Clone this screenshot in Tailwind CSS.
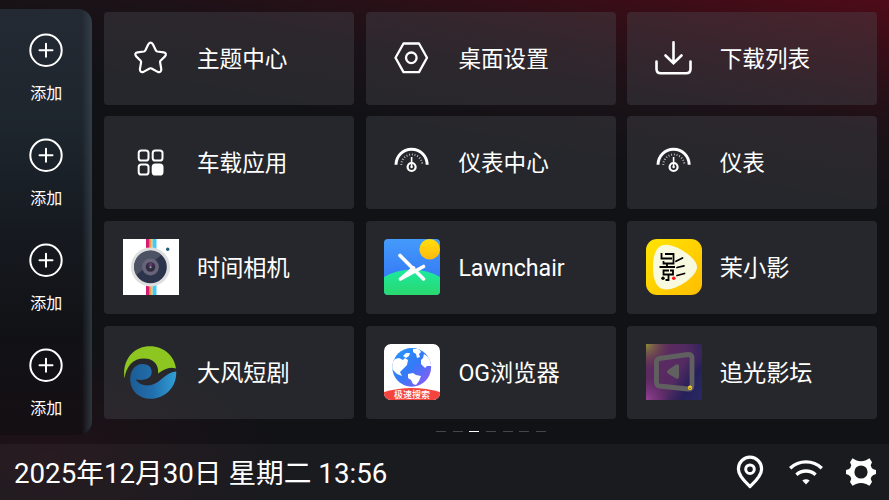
<!DOCTYPE html>
<html lang="zh-CN">
<head>
  <meta charset="UTF-8" />
  <meta name="viewport" content="width=device-width, initial-scale=1.0" />
  <title>车载桌面</title>
  <script src="https://cdn.jsdelivr.net/npm/@tailwindcss/browser@4"></script>
</head>
<body class="bg-[#111216] text-white font-[Roboto,'Noto_Sans_CJK_SC',sans-serif] overflow-hidden">
  <div class="w-[889px] h-[500px] flex flex-col bg-[radial-gradient(ellipse_230px_110px_at_50px_455px,#201218_0%,#20121800_100%),linear-gradient(190deg,#4e0b18_0px,#3a0d17_47px,#281017_94px,#1a1217_140px,#111216_215px)]">
    <div class="flex h-[444px]">
      <!-- 侧栏 -->
      <aside class="mt-[9px] w-[91.5px] h-[426px] shrink-0 rounded-r-[14px] bg-[linear-gradient(to_right,transparent_82px,#3c4a5599_91px),linear-gradient(to_bottom,#242a33_0%,#1d252d_28%,#161a20_52%,#111216_75%,#150f13_100%)]">
        <div class="flex flex-col pt-[24px] pl-[1px]" id="shortcuts"></div>
      </aside>

      <main class="pl-[12.8px] pt-[11.6px]">
        <div class="grid grid-cols-[repeat(3,250px)] auto-rows-[93px] gap-x-[11.4px] gap-y-[11.7px]" id="apps"></div>
        <div class="mt-[12.4px] ml-[332px] flex gap-[6.6px]">
          <i class="w-[10px] h-px bg-[#46474b]"></i>
          <i class="w-[10px] h-px bg-[#46474b]"></i>
          <i class="w-[10px] h-px bg-white"></i>
          <i class="w-[10px] h-px bg-[#46474b]"></i>
          <i class="w-[10px] h-px bg-[#46474b]"></i>
          <i class="w-[10px] h-px bg-[#46474b]"></i>
          <i class="w-[10px] h-px bg-[#46474b]"></i>
        </div>
      </main>
    </div>

    <footer class="h-[56px] bg-white/4 flex items-center pl-[14px] pr-[13px]">
      <div class="text-[27.7px] leading-[56px] whitespace-nowrap mt-[4px]">2025年12月30日 星期二 13:56</div>
      <div class="ml-auto flex items-center">
        <svg class="w-[28px] h-[34px]" viewBox="0 0 28 34" fill="none" stroke="#fff" stroke-width="3.2"><path d="M14 31.5C11 28.5 2.4 21.5 2.4 14A11.6 11.8 0 0 1 25.6 14C25.6 21.5 17 28.5 14 31.5Z" stroke-linejoin="round"/><circle cx="14" cy="14.2" r="4.3" stroke-width="3"/></svg>
        <svg class="w-[34px] h-[28px] ml-[25px]" viewBox="0 0 34 28" fill="none" stroke="#fff" stroke-width="3.4"><path d="M1.2 10.2C10 1.7 24 1.7 32.8 10.2"/><path d="M7.4 16.7C13 11.8 21 11.8 26.6 16.7"/><path d="M13.3 22.6Q17 19.8 20.7 22.6L17 26.5Z" fill="#fff" stroke="none"/></svg>
        <svg class="w-[30px] h-[30px] ml-[23px]" viewBox="0 0 30 30"><path d="M6.5 1.3 10 3.3Q15 5 20 3.3L23.5 1.3 26 5.2 24.7 8.2Q25.2 11 27.4 12.3L30 13V17L27.4 17.9Q25.2 19 24.7 21.8L26 25 23.5 28.7 20 27Q15 25 10 27L6.5 28.7 4 25 5.3 21.8Q4.8 19 2.6 17.9L0 17V13L2.6 12.3Q4.8 11 5.3 8.2L4 5.2Z" fill="#fff"/><circle cx="15" cy="15" r="6.6" fill="#1b1c20"/></svg>
      </div>
    </footer>
  </div>

  <script>
    const gauge = `
      <svg class="w-[56px] h-[56px]" viewBox="0 0 56 56" fill="none" stroke="#fff">
        <path d="M12 29.800A15.600 15.600 0 0 1 43.200 29.800" stroke-width="3"/>
        <path d="M17.300 30A10.500 10.500 0 0 1 38.300 30" stroke-width="2" stroke-dasharray=".8 1.950" opacity=".8"/>
        <circle cx="27.600" cy="32" r="4" stroke-width="2.200"/>
        <path d="M27.600 22V32" stroke-width="1.600"/>
        <circle cx="27.600" cy="32" r="1.200" fill="#fff" stroke="none"/>
      </svg>`;

    const apps = [
      { name: '主题中心', icon: `
        <svg class="w-[56px] h-[56px]" viewBox="0 0 56 56" fill="none" stroke="#fff" stroke-width="2.2" stroke-linejoin="round">
          <path d="M25.3 14.3Q27.6 11 29.9 14.3L32.9 20.4Q33.3 21.3 34.3 21.5L40.7 22.4Q44.3 23.3 42 26.4L37.5 30.7Q36.9 31.4 37.1 32.3L38.3 39.1Q38.3 43 34.7 41.9L28.6 38.5Q27.6 38 26.6 38.5L20.5 41.9Q16.9 43 16.9 39.1L18.1 32.3Q18.3 31.4 17.6 30.7L13.2 26.4Q10.9 23.3 14.5 22.4L20.9 21.5Q21.9 21.3 22.3 20.4Z"/>
        </svg>` },
      { name: '桌面设置', icon: `
        <svg class="w-[56px] h-[56px]" viewBox="0 0 56 56" fill="none" stroke="#fff" stroke-width="2.3" stroke-linejoin="round">
          <path d="M19.500 13.500H35L43 27.800 35 42.100H19.500L11.500 27.800Z"/><circle cx="27.300" cy="27.800" r="5.300"/>
        </svg>` },
      { name: '下载列表', icon: `
        <svg class="w-[56px] h-[56px]" viewBox="0 0 56 56" fill="none" stroke="#fff" stroke-width="2.6" stroke-linecap="round">
          <path d="M27.500 12.200V33M19.500 25.500L27.500 33.300 35.500 25.500M10.500 31.500V39Q10.500 43.300 14.800 43.300H40.200Q44.500 43.300 44.500 39V31.500"/>
        </svg>` },
      { name: '车载应用', icon: `
        <svg class="w-[56px] h-[56px]" viewBox="0 0 56 56" fill="none" stroke="#fff" stroke-width="2">
          <rect x="15.700" y="15.500" width="9.8" height="10" rx="2.6"/><rect x="29.700" y="15.500" width="9.8" height="10" rx="2.6"/>
          <rect x="15.700" y="29.500" width="9.8" height="10" rx="2.6"/><rect x="29.700" y="29.500" width="9.8" height="10" rx="2.6" fill="#fff"/>
        </svg>` },
      { name: '仪表中心', icon: gauge },
      { name: '仪表', icon: gauge },
      { name: '时间相机', large: true, icon: `
        <svg class="w-[56px] h-[56px]" viewBox="0 0 56 56">
          <rect width="56" height="56" fill="#fff"/>
          <path d="M23 0h3.3v56H23z" fill="#d81b72"/><path d="M26 0h2v56h-2z" fill="#ef7b55"/><path d="M27.5 0h2v56h-2z" fill="#ffc52e"/><path d="M29.5 0h4v56h-4z" fill="#48c8fa"/>
          <circle cx="27.5" cy="28" r="19.5" fill="#dedede"/><circle cx="27.5" cy="28" r="16.3" fill="#2c344c"/>
          <path d="M13.2 36A16.3 16.3 0 0 1 38.5 16Z" fill="#4d5365"/>
          <circle cx="27.5" cy="28" r="8.4" fill="#68647a"/><circle cx="27.5" cy="28" r="4.8" fill="#302d42"/>
          <circle cx="27.5" cy="25.8" r="2" fill="#64366b"/><circle cx="27.5" cy="28.3" r="1" fill="#a7a3b3"/>
          <circle cx="44.7" cy="10.2" r="1.7" fill="#265d7d"/>
        </svg>` },
      { name: 'Lawnchair', large: true, icon: `
        <svg class="w-[56px] h-[56px] rounded-[4px]" viewBox="0 0 56 56">
          <defs>
            <linearGradient id="sky" x2="0" y2="1"><stop stop-color="#449bfb"/><stop offset="1" stop-color="#2f6cf5"/></linearGradient>
            <linearGradient id="grass" x2="0" y2="1"><stop stop-color="#1de9a0"/><stop offset="1" stop-color="#2ad86e"/></linearGradient>
            <linearGradient id="sun" x2="0" y2="1"><stop stop-color="#ffdf0c"/><stop offset="1" stop-color="#ffb910"/></linearGradient>
          </defs>
          <rect width="56" height="56" fill="url(#sky)"/>
          <path d="M0 38Q13 30.5 28 30.5T56 38V56H0Z" fill="url(#grass)"/>
          <circle cx="45.7" cy="10.3" r="10.3" fill="url(#sun)"/>
          <path d="M16 16.5L39.5 40M16.5 40L29.5 29M16.5 40L39.5 27.5" stroke="#fff" stroke-width="3.6" stroke-linecap="round"/>
        </svg>` },
      { name: '茉小影', large: true, icon: `
        <svg class="w-[56px] h-[56px] rounded-[11px]" viewBox="0 0 56 56">
          <defs><linearGradient id="gold" x2="1" y2="1"><stop stop-color="#ffe500"/><stop offset="1" stop-color="#ffbd00"/></linearGradient></defs>
          <rect width="56" height="56" fill="url(#gold)"/>
          <path d="M20 5.8C31 5.8 51 19 51 28S32 50.5 20 50.5C11 50.5 7 42 7 28S11 5.8 20 5.8Z" fill="#f8fae0"/>
          <g fill="none" stroke="#000" stroke-width="1.8">
            <path d="M15.5 14V19.500H26M19 15H27.500V24.500H17.500V22M13.500 28H29M21 25V28M23 31.500H17.500V35.500H27V31.500H24M22.500 35.500V41H19.500"/>
            <path d="M30 22.3L36.5 19M31 28.5L38 26.8M31 36.5L38.5 34.5" stroke-linecap="round"/>
          </g>
          <circle cx="17" cy="39.3" r="1.7"/><circle cx="27.8" cy="39.3" r="1.8" fill="#f11"/>
        </svg>` },
      { name: '大风短剧', large: true, icon: `
        <svg class="w-[56px] h-[56px]" viewBox="0 0 56 56">
          <defs><linearGradient id="wave" x2="1" y2="0"><stop stop-color="#1c5c94"/><stop offset=".5" stop-color="#226fae"/><stop offset="1" stop-color="#309fd5"/></linearGradient></defs>
          <path d="M1.4 34.5C-1 15 11 2.2 27 2.2C41 2.2 51.5 12 53 24.500C46 22.5 41 25.5 35 29.5C36 20 30 14.5 21 14.5C10 14.5 3.5 22 1.4 34.5Z" fill="#8dc521"/>
          <path d="M7.3 37C6.5 27 12 20 19.5 20C26 20 29 24 28.7 28.5C28.4 33 24 37.5 12.5 35.5C17 42 26 43.5 34 38.5C41 34 44 28.5 53.2 27.5C54 43 42 54.8 27.5 54.8C16 54.8 8 47 7.3 37Z" fill="url(#wave)"/>
        </svg>` },
      { name: 'OG浏览器', large: true, icon: `
        <svg class="w-[56px] h-[56px] rounded-[7px]" viewBox="0 0 56 56">
          <defs>
            <linearGradient id="globe" x2="1" y2="1"><stop stop-color="#2499fb"/><stop offset=".5" stop-color="#347af7"/><stop offset="1" stop-color="#9b55f7"/></linearGradient>
            <clipPath id="globeClip"><circle cx="27.7" cy="23.3" r="19.4"/></clipPath>
          </defs>
          <rect width="56" height="56" fill="#fff"/>
          <circle cx="27.7" cy="23.3" r="19.4" fill="url(#globe)"/>
          <g fill="#fff" clip-path="url(#globeClip)">
            <path d="M11 15L15 14 19 16 21 14 24 16 23 21 20 24 18 26 16 28 18 32 13 30 8 25V18Z"/>
            <path d="M19 12L22 9 26 9 25 12 22 14Z"/>
            <path d="M29 5L35 5 37 8 35 10 36 13 33 14 32 10 29 8Z"/>
            <path d="M40 10L47 15 48 22 43 22 41 24 37 20 37 16 39 14Z"/>
            <path d="M24 30L29 29 32 31 37 32 35 37 32 41 29 40 27 36 24 34Z"/>
          </g>
          <path d="M0 48Q28 40 56 48V56H0Z" fill="#f4443e"/>
          <text x="28" y="54" text-anchor="middle" font-size="9" font-weight="500" fill="#fff" font-family="Noto Sans CJK SC, sans-serif">极速搜索</text>
        </svg>` },
      { name: '追光影坛', large: true, icon: `
        <svg class="w-[56px] h-[56px]" viewBox="0 0 56 56">
          <defs>
            <linearGradient id="night" x1=".1" x2="1" y1=".3" y2=".8"><stop stop-color="#5d2b60"/><stop offset=".5" stop-color="#542a62"/><stop offset=".78" stop-color="#24205a"/><stop offset="1" stop-color="#292762"/></linearGradient>
            <radialGradient id="olive" cx="0" cy="0" r=".45"><stop stop-color="#8d8b39"/><stop offset="1" stop-color="#6b3d47" stop-opacity="0"/></radialGradient>
            <radialGradient id="pink" cx="0" cy="1" r=".4"><stop stop-color="#964393"/><stop offset="1" stop-color="#803380" stop-opacity="0"/></radialGradient>
            <radialGradient id="plum" cx="1" cy="0" r=".45"><stop stop-color="#302459"/><stop offset="1" stop-color="#542a62" stop-opacity="0"/></radialGradient>
          </defs>
          <rect width="56" height="56" fill="url(#night)"/><rect width="56" height="56" fill="url(#olive)"/><rect width="56" height="56" fill="url(#pink)"/><rect width="56" height="56" fill="url(#plum)"/>
          <path d="M13 14.5L42 10.5Q46 10.5 46 14V41Q46 45.5 42 45L13 42Q10.5 41.5 10.5 38V18Q10.5 15 13 14.5Z" fill="none" stroke="#606060" stroke-width="4.8"/>
          <path d="M22 26L30 20.5Q33 19.5 33 22V33Q33 35.5 30 34.5L22 29.5Q20 27.7 22 26Z" fill="#606060"/>
          <circle cx="44" cy="43.8" r="2.2" fill="#f5cf28"/><path d="M42.7 43.7L44 44.8 45.3 43.7" fill="none" stroke="#7c5222" stroke-width=".8"/>
        </svg>` },
    ];

    document.getElementById('apps').innerHTML = apps.map((app) => `
      <div class="flex items-center gap-[18px] pl-[18.7px] rounded-[4px] bg-[#4c5057]/35">
        ${app.icon}
        <span class="${app.large ? 'text-[23.2px] mt-[2px]' : 'text-[22.6px] mt-[3px]'} leading-[32px] whitespace-nowrap">${app.name}</span>
      </div>
    `).join('');

    document.getElementById('shortcuts').innerHTML = Array(4).fill(`
      <div class="h-[105.1px] flex flex-col items-center">
        <svg class="w-[34px] h-[34px]" viewBox="0 0 34 34" fill="none" stroke="#fff" stroke-width="2"><circle cx="17" cy="17.3" r="15.7"/><path d="M10.5 17.3H23.5M17 10.8V23.8" stroke-linecap="round"/></svg>
        <span class="mt-[16px] text-[16px] leading-[22px]">添加</span>
      </div>
    `).join('');
  </script>
</body>
</html>
